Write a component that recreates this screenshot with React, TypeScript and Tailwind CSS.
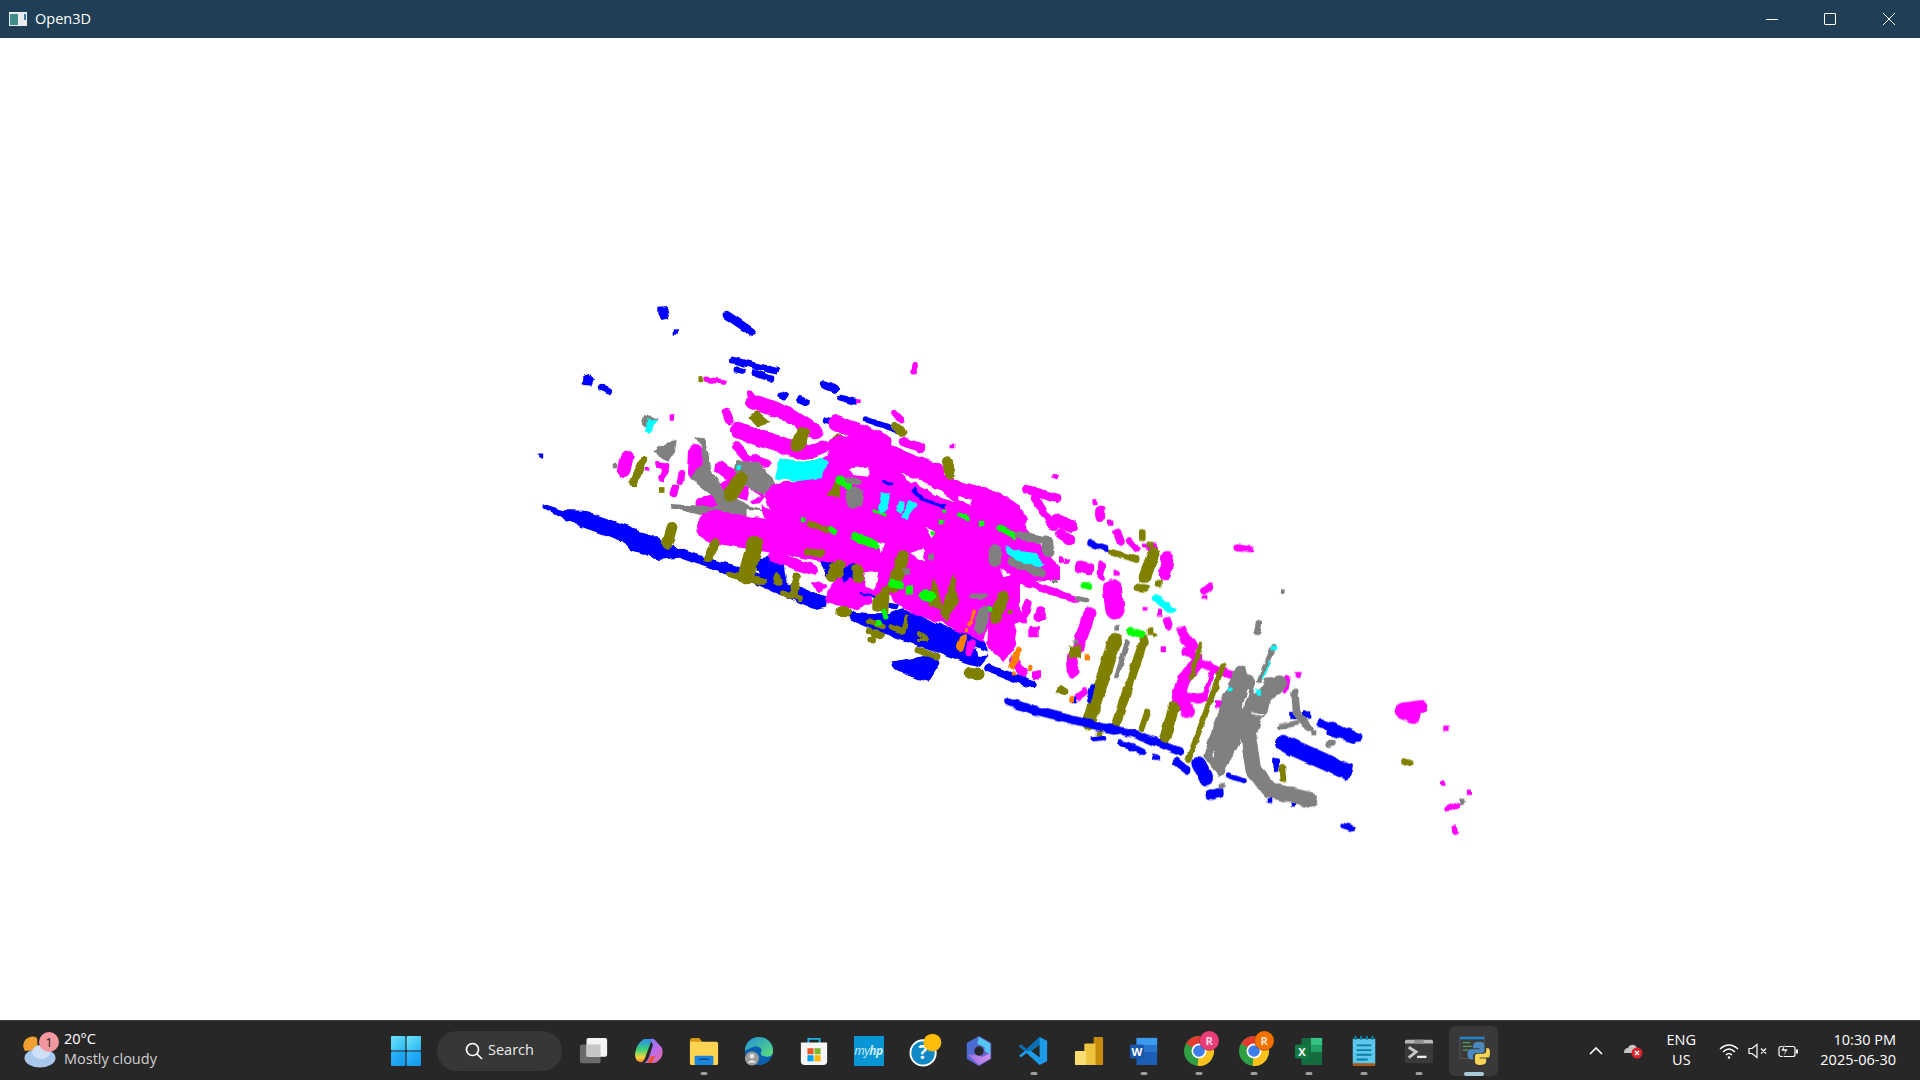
import React from "react";

const M = "#ff00ff", B = "#0000ff", O = "#808000", G = "#808080", C = "#00ffff", N = "#00ff00", R = "#ff8000", W = "#ffffff";
type S = [string, number, number[]];

// Shape coordinates are in 3x pixels relative to each group's origin. Width 0 = filled polygon; one point = square dot.
const z1: S[] = [
  [B, 0, [415,50,440,48,448,85,425,90,415,75]], [B, 16, [469,126]], [B, 20, [620,75,695,125]], [B, 16, [637,210,768,243]],
  [B, 15, [650,238,668,242]], [B, 16, [702,248,750,265]], [B, 0, [190,258,210,252,222,270,215,287,188,285]], [B, 18, [245,293,265,302]],
  [B, 20, [912,283,945,296]], [B, 14, [960,323,1005,335]], [B, 18, [787,316,793,320]], [B, 15, [838,328,860,337]], [B, 18, [920,392,933,395]],
  [B, 14, [1037,388,1130,420]], [B, 15, [62,498]],
  [B, 0, [65,640,130,660,190,662,325,712,395,735,480,780,640,825,920,920,915,950,885,958,700,880,500,800,415,810,365,790,330,780,300,745,180,705,125,685,65,655]],
  [B, 40, [195,688,320,732]], [B, 36, [375,765,415,785]], [B, 22, [480,790,650,850]],
  [B, 0, [1115,1115,1240,1095,1262,1120,1225,1175,1170,1160,1120,1135]],
  [B, 0, [700,810,740,800,790,815,800,880,720,860]], [B, 0, [900,810,1040,830,1030,890,920,860]],
  [M, 13, [560,268,612,276]], [O, 15, [543,266]], [M, 14, [1015,335]], [M, 16, [457,381]], [M, 24, [622,368,628,388]], [M, 14, [1185,225,1183,245]],
  [M, 16, [1125,370,1145,390]], [M, 30, [322,500,312,545]], [M, 16, [438,530,425,565]], [M, 14, [412,525,438,530]], [M, 16, [486,550,480,575]], [M, 18, [466,595,460,610]], [M, 14, [381,538]], [M, 32, [527,482,524,548]],
  [G, 0, [400,485,440,455,470,450,465,490,445,515]], [G, 0, [372,375,412,385,400,415,365,405]], [C, 0, [382,388,410,390,392,435,375,425]], [G, 14, [285,528]],
  [O, 18, [370,510,340,580]], [O, 17, [425,600]],
  [M, 36, [700,335,800,370,885,425]], [M, 40, [655,420,720,445,850,485]], [M, 14, [690,310,700,335]], [M, 22, [650,470,680,505]], [M, 30, [600,530,640,560]], [M, 34, [620,590,710,620]], [M, 30, [545,640,610,625]], [M, 20, [700,505,740,520]],
  [G, 0, [525,442,552,445,565,490,575,540,610,600,690,650,750,665,680,660,680,680,640,690,600,660,580,620,510,565,545,520,545,470]],
  [G, 0, [452,642,600,650,610,685,540,675,455,655]],
  [G, 0, [650,510,720,520,760,570,775,600,730,615,680,590,640,540]],
  [M, 0, [760,640,810,600,880,520,950,480,1000,430,1100,460,1150,480,1200,520,1260,560,1440,610,1500,650,1500,1000,1400,990,1200,970,1080,900,1060,810,900,790,780,720]],
  [M, 78, [580,710,1060,790]], [M, 120, [800,650,1100,700]], [M, 26, [760,800,880,840]], [M, 0, [920,900,960,855,1055,885,1060,940,1000,960,915,935]],
  [M, 40, [950,400,1090,455]], [M, 22, [1150,455,1205,475]], [M, 30, [910,470,860,490]], [M, 16, [690,710,730,745]],
  [W, 0, [720,640,735,620,750,660]], [W, 0, [690,595,720,620,680,640]], [W, 0, [990,540,1040,535,1045,565,1000,560]],
  [C, 0, [780,503,850,515,905,503,925,515,905,565,820,575,765,565]], [C, 14, [657,533]],
  [O, 35, [662,565,632,615]], [O, 0, [685,380,712,362,752,395,710,410]], [O, 32, [848,428,832,465]], [O, 30, [955,452,965,478]], [O, 20, [1125,408,1150,428]], [O, 22, [1285,515,1290,548]],
  [O, 26, [456,712,442,760]], [O, 22, [585,758,566,805]], [O, 40, [705,762,678,858]], [O, 16, [628,852,728,875]], [O, 20, [830,860,820,915]], [O, 14, [792,910,840,925]], [O, 26, [955,815,935,860]], [O, 20, [772,862,775,875]],
  [O, 16, [860,785,905,790]], [O, 14, [870,700,920,720]], [O, 20, [965,960,985,970]], [O, 0, [920,620,960,550,990,590,960,620]],
  [N, 22, [965,565,975,590]], [N, 14, [850,690]], [N, 12, [930,715,945,725]], [G, 30, [1005,620,1010,635]], [G, 16, [985,565,1020,575]], [O, 12, [1045,1022,1070,1025]], [O, 13, [1050,1050,1060,1050]],
  [M, 0, [870,880,895,870,920,890,900,910]],
];

const z3: S[] = [
  [M, 20, [190,5,245,25]], [M, 60, [0,25,150,60]], [M, 38, [170,50,290,95]], [M, 32, [330,135,470,175]], [M, 14, [336,18]], [M, 14, [645,110]],
  [M, 0, [0,100,40,70,150,40,280,90,470,170,440,230,490,190,550,210,560,270,620,340,660,380,660,420,610,420,550,430,520,440,500,470,530,560,520,620,490,660,440,620,380,590,290,540,240,530,200,490,150,430,110,480,50,400,0,430]],
  [M, 70, [0,330,120,375]], [M, 60, [0,60,60,130]], [M, 40, [240,480,290,520]],
  [M, 18, [555,425,710,480]], [M, 22, [560,148,650,175]], [M, 20, [585,175,640,260]], [M, 30, [650,240,695,260]], [M, 30, [510,210,545,240]], [M, 24, [640,390,640,410]],
  [M, 14, [765,185]], [M, 22, [780,212,782,232]], [M, 18, [810,248]], [M, 16, [560,490,545,538]], [M, 26, [602,515,600,530]], [M, 30, [580,577]], [M, 30, [470,590,510,610]], [M, 20, [520,660,550,700]], [M, 22, [592,705]],
  [M, 14, [665,360]], [M, 14, [682,364]], [M, 28, [720,380,745,388]], [M, 24, [660,280,690,300]],
  [W, 0, [30,85,85,80,85,110,40,105]], [W, 0, [180,100,240,120,210,130]], [W, 0, [220,115,300,150,345,190,300,170,240,140]], [W, 0, [355,165,395,180,395,195,355,180]], [W, 0, [255,260,285,275,275,295]], [W, 0, [210,340,250,325,255,365]], [W, 0, [112,305,135,310,125,340]], [W, 0, [480,385,515,405,490,412]], [W, 0, [170,465,200,455,200,510,180,490]], [W, 0, [70,400,115,395,105,450,80,440]], [W, 0, [445,560,430,600,490,665,440,640]], [W, 0, [375,620,390,610,385,640]],
  [B, 0, [25,530,40,515,100,520,145,520,190,505,210,515,440,610,445,650,420,680,380,670,300,640,100,570,40,545]],
  [B, 0, [155,665,270,645,300,670,270,720,200,700]], [B, 20, [445,685,575,732]], [B, 0, [210,150,225,140,250,175,320,195,310,205,240,180]], [B, 8, [135,125,155,132]], [B, 0, [0,390,45,365,50,400,10,430]], [B, 16, [145,495,165,498]],
  [W, 0, [380,610,445,635,440,650,415,650,410,625]],
  [M, 36, [175,465,235,505]], [M, 20, [395,610,385,640]], [M, 0, [445,545,530,570,520,630,490,665,445,625]], [M, 20, [415,480,380,550]],
  [O, 0, [100,480,130,440,150,440,145,520,100,510]], [O, 30, [190,350,160,440]], [O, 0, [285,410,310,510,270,500,265,470]], [O, 0, [340,400,355,480,320,545,300,520]], [O, 28, [490,470,465,535]], [O, 20, [105,580,120,585]], [O, 20, [95,600]], [O, 26, [5,515,15,515]], [O, 30, [390,700,415,702]], [O, 18, [235,630,290,650]], [O, 12, [85,545,130,560]], [O, 12, [150,560,190,575]], [O, 10, [200,530,190,580]], [O, 10, [240,580,255,590]], [O, 26, [50,385,55,415]], [O, 22, [0,370,-5,400]], [O, 26, [322,65,330,100]], [O, 12, [812,335,890,355]], [O, 20, [660,750]], [O, 10, [262,600,240,600]], [O, 16, [660,745,675,755]], [O, 14, [510,515]],
  [N, 22, [48,290,105,315]], [N, 16, [482,265,525,288]], [N, 16, [305,245]], [N, 12, [355,225,385,235]], [N, 16, [425,250]], [N, 12, [278,280]], [N, 26, [255,467,270,470]], [N, 16, [155,430,185,435]], [N, 22, [208,450]], [N, 14, [130,515,140,530]], [N, 14, [115,550]], [N, 22, [0,120,20,135]], [N, 14, [450,508]], [N, 12, [310,212]], [N, 8, [105,210,135,225]], [N, 14, [730,480]], [N, 18, [738,438]],
  [G, 42, [42,165,45,180]], [G, 16, [25,120,55,125]], [G, 30, [465,332,465,362]], [G, 20, [515,365,605,400]], [G, 30, [620,305,625,335]], [G, 18, [535,285,600,300]], [G, 26, [430,515,420,565]], [G, 12, [395,468,435,468]], [G, 20, [200,395]], [G, 18, [270,350]], [G, 12, [645,425]], [G, 16, [715,475,735,480]],
  [C, 0, [125,160,152,160,140,210,125,222,115,200]], [C, 0, [178,182,195,185,185,218,168,215]], [C, 0, [205,180,235,190,200,238,186,232]], [C, 0, [520,330,590,340,615,375,605,385,525,360,500,340,500,315]],
  [R, 8, [403,515,388,555]], [R, 12, [378,570]], [R, 17, [370,595,362,622]], [R, 16, [535,630,515,680]], [R, 14, [572,680,570,688]], [R, 12, [522,700]], [B, 6, [60,460,105,470]],
];

const z2: S[] = [
  [M, 14, [285,155]], [M, 14, [165,80]], [M, 24, [302,182,300,195]], [M, 16, [332,218]], [M, 20, [352,248,362,275]], [M, 16, [388,272,408,295]], [M, 14, [433,288]], [M, 26, [452,293,458,293]], [M, 30, [502,322,495,375]],
  [M, 14, [712,292,755,298]], [M, 18, [612,422,628,412]], [M, 14, [615,442]], [M, 14, [435,478]], [M, 18, [480,488]], [M, 18, [500,510,505,530]], [M, 26, [545,545,575,590]], [M, 22, [555,605,590,620]],
  [M, 32, [590,640,550,690,535,740,565,785]], [M, 22, [560,742,610,745]], [M, 20, [605,640,680,670,750,690]], [M, 12, [635,670,615,740]], [M, 16, [490,597]], [M, 22, [656,762]], [M, 18, [893,675]], [M, 16, [862,685,855,720]],
  [M, 46, [337,415,345,480]], [M, 28, [240,350,265,355]], [M, 16, [305,340,303,380]], [M, 18, [350,368]], [M, 16, [185,330]], [M, 14, [202,333]],
  [M, 30, [268,490,235,590]], [M, 28, [215,625,218,665]], [M, 16, [255,725,235,740]],
  [M, 16, [85,460,72,510]], [M, 28, [122,490]], [M, 28, [102,545]], [M, 22, [110,677]],
  [M, 28, [1205,775,1265,768]], [M, 34, [1205,785,1240,800]], [M, 16, [1338,835]], [M, 16, [1328,1002]], [M, 16, [1408,1027]], [M, 14, [1342,1078,1370,1064]], [M, 16, [1364,1133,1367,1148]],
  [O, 14, [332,305,410,330]], [O, 30, [460,312,435,380]], [O, 16, [427,247,427,265]], [O, 20, [450,285]], [O, 18, [412,412,435,414]], [O, 20, [475,400]], [O, 16, [425,388]], [O, 20, [450,545]], [O, 12, [465,555]], [O, 34, [345,570,265,820]], [O, 22, [432,570,345,830]], [O, 14, [442,785,425,835]], [O, 26, [522,770,490,880]], [O, 14, [668,650,565,930]], [O, 12, [600,585,575,680]], [O, 36, [225,605]], [O, 22, [180,720]], [O, 14, [847,950,850,990]], [O, 14, [1212,933,1232,940]], [O, 14, [300,850]],
  [B, 16, [272,280,318,295]], [B, 20, [25,755,100,780,300,830,400,850,540,905]], [B, 16, [365,880,430,905]], [B, 14, [462,920,475,924]], [B, 18, [530,935,560,960]], [B, 34, [595,940,618,985]], [B, 26, [630,1035,655,1028]], [B, 12, [682,975,730,992]], [B, 40, [850,880,1030,960]], [B, 20, [965,820,1075,860]], [B, 14, [985,845,1060,870]], [B, 24, [880,795]], [B, 22, [920,795]], [B, 14, [1030,1127,1058,1135]], [B, 14, [810,1052]], [B, 16, [880,1062]], [B, 12, [278,710,266,752]], [B, 14, [222,750]], [B, 14, [280,868,310,865]], [B, 14, [1040,980,1050,950]], [B, 14, [828,930,830,960]],
  [G, 12, [382,578,350,680]], [G, 0, [710,645,735,650,750,700,720,880,660,985,610,920,660,760]], [G, 38, [838,700,775,750,745,860,760,960,810,1020,930,1050]], [G, 18, [885,730,890,790,930,835]], [G, 14, [890,820,840,830]], [G, 18, [940,850]], [G, 16, [777,520,772,545]], [G, 14, [847,425]], [G, 14, [985,882,1002,876]], [G, 14, [822,590,780,690]], [G, 18, [1387,1055]], [G, 18, [665,1008]], [G, 14, [350,535]], [G, 14, [225,575]], [G, 30, [810,700,780,790]], [G, 44, [740,700,700,840]],
  [W, 4, [745,720,730,770]], [W, 4, [755,790,790,795]], [W, 3, [640,905,640,920]],
  [C, 16, [823,595]], [C, 5, [808,635,790,685]], [C, 16, [775,727]], [C, 14, [688,717]], [C, 18, [467,445,515,480]],
  [N, 18, [392,545,425,552]], [N, 18, [250,405,265,410]],
  [R, 14, [215,748]], [R, 16, [262,620]],
];

function Shapes({ data }: { data: S[] }) {
  return (
    <>
      {data.map(([c, w, p], i) => {
        if (p.length === 2) return <rect key={i} x={p[0] - w / 2} y={p[1] - w / 2} width={w} height={w} fill={c} />;
        const pts = p.join(" ");
        return w === 0 ? (
          <polygon key={i} points={pts} fill={c} />
        ) : (
          <polyline key={i} points={pts} fill="none" stroke={c} strokeWidth={w * 1.25} strokeLinecap="round" strokeLinejoin="round" />
        );
      })}
    </>
  );
}

function Cell({ children, dot, active }: { children: React.ReactNode; dot?: boolean; active?: boolean }) {
  return (
    <div className={`relative mx-[3px] flex h-[50px] w-[49px] items-center justify-center rounded-md ${active ? "bg-[#393939]" : ""}`}>
      {children}
      {dot && <span className="absolute bottom-[1px] left-1/2 h-[3px] w-[7px] -translate-x-1/2 rounded-full bg-[#9c9c9c]" />}
      {active && <span className="absolute bottom-[0px] left-1/2 h-[4px] w-[20px] -translate-x-1/2 rounded-full bg-[#a9cbd9]" />}
    </div>
  );
}

const Ic = ({ children, s = 30 }: { children: React.ReactNode; s?: number }) => (
  <svg width={s} height={s} viewBox="0 0 32 32" className="block overflow-visible">{children}</svg>
);

function Chrome({ badge }: { badge: string }) {
  return (
    <Ic>
      <circle cx="16" cy="16" r="16" fill="#2f9e44" />
      <path d="M16 16 L2.2 8 A16 16 0 0 1 29.8 8 Z" fill="#e53a30" />
      <path d="M16 16 L29.8 8 A16 16 0 0 1 14.5 32 Z" fill="#fbc21b" />
      <circle cx="16" cy="16" r="8" fill="#fff" />
      <circle cx="16" cy="16" r="6.2" fill="#3f7de8" />
      <circle cx="27" cy="5" r="10.5" fill={badge} stroke="#00000040" strokeWidth="1" />
      <text x="27" y="9.5" textAnchor="middle" fontSize="12" fontWeight="700" fill="#ffffffcc" fontFamily="Open Sans, sans-serif">R</text>
    </Ic>
  );
}

export default function App() {
  const f = { fontFamily: '"Open Sans", "Noto Sans", sans-serif' };
  return (
    <div className="flex h-[1080px] w-[1920px] flex-col overflow-hidden bg-white" style={f}>
      {/* title bar */}
      <div className="flex h-[38px] shrink-0 items-center bg-[#203f56] text-white">
        <svg width="18" height="14" viewBox="0 0 18 14" className="ml-[9px]">
          <rect width="18" height="14" fill="#e8ecec" />
          <rect x="1" y="2" width="8" height="11" fill="#3d8f88" />
          <rect x="15" y="2" width="2" height="6" fill="#3d78a8" />
        </svg>
        <span className="ml-[8px] text-[14.5px] leading-none">Open3D</span>
        <div className="ml-auto flex pr-[2px]">
          <div className="flex h-[38px] w-[58px] items-center justify-center">
            <span className="mr-[2px] block h-[1px] w-[12px] bg-white" />
          </div>
          <div className="flex h-[38px] w-[58px] items-center justify-center">
            <span className="mr-[2px] block h-[12px] w-[12px] rounded-[1px] border border-white" />
          </div>
          <div className="flex h-[38px] w-[58px] items-center justify-center">
            <svg width="12" height="12" viewBox="0 0 12 12"><path d="M0 0 L12 12 M12 0 L0 12" stroke="#fff" strokeWidth="1" /></svg>
          </div>
        </div>
      </div>

      {/* 3D viewport */}
      <div className="min-h-0 flex-1">
        <svg width="1920" height="982" viewBox="0 38 1920 982" className="block">
          <defs>
            <filter id="rough" x="400" y="250" width="1400" height="650" filterUnits="userSpaceOnUse">
              <feTurbulence type="fractalNoise" baseFrequency="0.13" numOctaves="1" seed="4" result="n" />
              <feDisplacementMap in="SourceGraphic" in2="n" scale="5" xChannelSelector="R" yChannelSelector="G" />
            </filter>
          </defs>
          <g filter="url(#rough)">
            <g transform="translate(520 290) scale(0.3333)"><Shapes data={z1} /></g>
            <g transform="translate(840 440) scale(0.3333)"><Shapes data={z3} /></g>
            <g transform="translate(1000 450) scale(0.3333)"><Shapes data={z2} /></g>
          </g>
        </svg>
      </div>

      {/* taskbar */}
      <div className="flex h-[60px] shrink-0 items-center border-t border-[#3c3c3c] bg-[#272727] text-white">
        <div className="flex w-[378px] shrink-0 items-center pl-[24px]">
          <svg width="34" height="36" viewBox="0 0 34 36" className="overflow-visible">
            <path d="M13 5 A9 9 0 0 0 1 18 L14 17 Z" fill="#f0a030" />
            <ellipse cx="16" cy="25" rx="15.5" ry="9.5" fill="#a9c8ee" />
            <ellipse cx="17" cy="19" rx="9" ry="7" fill="#cfe0f6" />
            <circle cx="25" cy="9" r="10" fill="#f4969e" />
            <text x="25" y="13.5" textAnchor="middle" fontSize="13" fill="#222" fontFamily="Open Sans, sans-serif">1</text>
          </svg>
          <div className="ml-[6px] flex flex-col pb-[3px]">
            <span className="text-[14.5px] leading-[20px]">20°C</span>
            <span className="text-[14.5px] leading-[20px] text-[#d2d2d2]">Mostly cloudy</span>
          </div>
        </div>

        <div className="flex items-center">
          <Cell>
            <svg width="30" height="30" viewBox="0 0 30 30">
              <defs>
                <linearGradient id="w1" x1="0" y1="0" x2="1" y2="1"><stop offset="0" stopColor="#6fe3fb" /><stop offset="1" stopColor="#29b6f6" /></linearGradient>
                <linearGradient id="w2" x1="0" y1="0" x2="1" y2="1"><stop offset="0" stopColor="#2cb7f7" /><stop offset="1" stopColor="#1295f0" /></linearGradient>
              </defs>
              <rect x="0" y="0" width="14.4" height="14.4" rx="1" fill="url(#w1)" />
              <rect x="15.6" y="0" width="14.4" height="14.4" rx="1" fill="url(#w1)" />
              <rect x="0" y="15.6" width="14.4" height="14.4" rx="1" fill="url(#w2)" />
              <rect x="15.6" y="15.6" width="14.4" height="14.4" rx="1" fill="url(#w2)" />
            </svg>
          </Cell>
          <div className="mx-[4px] flex h-[40px] w-[125px] items-center justify-center rounded-full bg-[#373737]">
            <svg width="18" height="18" viewBox="0 0 18 18" fill="none" stroke="#fff" strokeWidth="1.7"><circle cx="7.5" cy="7.5" r="6" /><path d="M12 12 L17 17" /></svg>
            <span className="ml-[5px] text-[14.5px] leading-none text-[#ececec]">Search</span>
          </div>
          <div className="flex items-center">
            <Cell>
              <Ic>
                <rect x="1" y="9" width="22" height="20" rx="2" fill="#6a6a6a" />
                <rect x="8" y="2" width="22" height="20" rx="2" fill="#f4f4f4" />
                <rect x="8" y="9" width="15" height="13" fill="#c6c6c6" />
              </Ic>
            </Cell>
            <Cell>
              <svg width="28" height="26" viewBox="0 0 28 26" className="block">
                <defs>
                  <linearGradient id="cp1" x1="0" y1="0" x2="0" y2="1"><stop offset="0" stopColor="#2a8cf0" /><stop offset=".45" stopColor="#3dd07a" /><stop offset=".8" stopColor="#f6d43a" /><stop offset="1" stopColor="#f2803a" /></linearGradient>
                  <linearGradient id="cp2" x1="0" y1="0" x2="1" y2="1"><stop offset="0" stopColor="#5a8cf5" /><stop offset=".5" stopColor="#b86cf0" /><stop offset="1" stopColor="#f0689a" /></linearGradient>
                </defs>
                <path d="M9 1 H17 L10 20 Q8 25 5 24 Q0 23 0 16 Q1 6 9 1 Z" fill="url(#cp1)" />
                <path d="M15 1 Q18 0 20 2 L27 10 Q29 18 24 22 Q22 25 18 25 H9 Q12 24 14 19 L18 7 Z" fill="url(#cp2)" />
                <path d="M12 25 Q15 21 15.5 18 L20 18 L17 25 Z" fill="#f0503c" />
              </svg>
            </Cell>
            <Cell dot>
              <Ic>
                <path d="M1 5 Q1 2 4 2 H11 L14 6 V12 H1 Z" fill="#d99a12" />
                <path d="M1 6 H29 Q31 6 31 8 V29 Q31 31 29 31 H3 Q1 31 1 29 Z" fill="#ffd452" />
                <rect x="6" y="21" width="20" height="10" rx="1.5" fill="#1a86dd" />
                <rect x="11" y="24" width="10" height="1.6" fill="#0d4d8c" />
              </Ic>
            </Cell>
            <Cell>
              <Ic>
                <defs><linearGradient id="e1" x1="0" y1="0" x2="1" y2="1"><stop offset="0" stopColor="#1f8fd8" /><stop offset="1" stopColor="#5fe07a" /></linearGradient></defs>
                <circle cx="16" cy="16" r="15" fill="#0b5fb0" />
                <path d="M1 16 A15 15 0 0 1 31 16 Q31 22 25 22 Q15 22 19 15 Q15 9 9 12 Q3 14 1 16 Z" fill="url(#e1)" />
                <circle cx="8.5" cy="24" r="7.5" fill="#9b9b9b" />
                <circle cx="8.5" cy="21.5" r="2.6" fill="#e4e4e4" />
                <path d="M4 28.5 Q8.5 22.5 13 28.5 Z" fill="#e4e4e4" />
              </Ic>
            </Cell>
            <Cell>
              <Ic>
                <path d="M10 8 V3 H22 V8" fill="none" stroke="#1db4e8" strokeWidth="2" />
                <path d="M2 7 H30 V27 Q30 31 26 31 H6 Q2 31 2 27 Z" fill="#f6f6f6" />
                <rect x="9" y="13" width="6.5" height="6.5" fill="#f0572b" />
                <rect x="16.5" y="13" width="6.5" height="6.5" fill="#7db82e" />
                <rect x="9" y="20.5" width="6.5" height="6.5" fill="#05a4ef" />
                <rect x="16.5" y="20.5" width="6.5" height="6.5" fill="#ffb902" />
              </Ic>
            </Cell>
            <Cell>
              <div className="flex h-[30px] w-[30px] items-center justify-center bg-[#0a96d6]">
                <span className="text-[12px] italic leading-none tracking-[-0.5px] text-[#cfeaf7]">my<b>hp</b></span>
              </div>
            </Cell>
            <Cell>
              <Ic>
                <circle cx="15" cy="18" r="13.5" fill="#1088c6" stroke="#fff" strokeWidth="2" />
                <text x="15" y="25" textAnchor="middle" fontSize="20" fontWeight="700" fill="#fff" fontFamily="Open Sans, sans-serif">?</text>
                <circle cx="25" cy="7" r="9.5" fill="#fdbb0a" />
              </Ic>
            </Cell>
            <Cell>
              <Ic>
                <defs>
                  <linearGradient id="m1" x1="0" y1="0" x2="1" y2="1"><stop offset="0" stopColor="#3a6fd8" /><stop offset="1" stopColor="#7f5ac8" /></linearGradient>
                  <linearGradient id="m2" x1="0" y1="0" x2="1" y2="0"><stop offset="0" stopColor="#9f6fe0" /><stop offset="1" stopColor="#c794ea" /></linearGradient>
                </defs>
                <path d="M16 1 L28 8 V24 L16 31 L4 24 V8 Z" fill="url(#m1)" stroke="url(#m1)" strokeWidth="2" strokeLinejoin="round" />
                <path d="M16 1 L28 8 V20 L22 16 V12 L14 8 Z" fill="#52c6ee" />
                <path d="M4 20 L16 31 L28 24 V18 L20 22 L12 20 Z" fill="url(#m2)" />
                <circle cx="16" cy="16" r="5" fill="#272727" />
              </Ic>
            </Cell>
            <Cell dot>
              <Ic>
                <path d="M22 1 L30 5 V27 L22 31 L8 18 L2 23 L0 21 L6 16 L0 11 L2 9 L8 14 Z M22 9 L13 16 L22 23 Z" fill="#1c9be8" fillRule="evenodd" />
                <path d="M2 9 L8 14 L22 1 V9 L13 16 L6 16 L0 11 Z" fill="#0a6fb4" />
              </Ic>
            </Cell>
            <Cell>
              <Ic>
                <rect x="21" y="1" width="10" height="30" rx="1" fill="#c98a0c" />
                <rect x="11" y="8" width="12" height="23" rx="1" fill="#eec33e" />
                <rect x="1" y="16" width="12" height="15" rx="1" fill="#f8dd72" />
              </Ic>
            </Cell>
            <Cell dot>
              <Ic>
                <rect x="8" y="2" width="22" height="29" rx="1" fill="#1b5fb8" />
                <rect x="8" y="2" width="22" height="8" fill="#3c9bee" />
                <rect x="8" y="10" width="22" height="7" fill="#2a75d0" />
                <rect x="1" y="9" width="15" height="15" rx="1.5" fill="#1a56ab" />
                <text x="8.5" y="21" textAnchor="middle" fontSize="12" fontWeight="700" fill="#fff" fontFamily="Open Sans, sans-serif">W</text>
              </Ic>
            </Cell>
            <Cell dot><Chrome badge="#ea3d78" /></Cell>
            <Cell dot><Chrome badge="#f07000" /></Cell>
            <Cell dot>
              <Ic>
                <rect x="8" y="2" width="22" height="29" rx="1" fill="#156c3f" />
                <rect x="18" y="2" width="12" height="8" fill="#33c481" />
                <rect x="18" y="10" width="12" height="7" fill="#21a366" />
                <rect x="1" y="9" width="15" height="15" rx="1.5" fill="#107a41" />
                <text x="8.5" y="21" textAnchor="middle" fontSize="12" fontWeight="700" fill="#fff" fontFamily="Open Sans, sans-serif">X</text>
              </Ic>
            </Cell>
            <Cell dot>
              <Ic>
                <rect x="4" y="3" width="24" height="27" fill="#5cc7ec" />
                <rect x="4" y="29" width="24" height="3" fill="#a85c1c" />
                <path d="M7 3 V1 M13 3 V1 M19 3 V1 M25 3 V1" stroke="#0c7ea8" strokeWidth="2.5" strokeLinecap="round" />
                <path d="M8 10 H24 M8 15 H24 M8 20 H24 M8 25 H20" stroke="#0c7ea8" strokeWidth="2" />
              </Ic>
            </Cell>
            <Cell dot>
              <Ic>
                <rect x="1" y="4" width="30" height="25" rx="2" fill="#3a3a3a" />
                <path d="M3 4 H29 Q31 4 31 6 V8 H1 V6 Q1 4 3 4 Z" fill="#b8b8b8" />
                <rect x="11" y="4" width="10" height="4" fill="#8f8f8f" />
                <path d="M5 12 L13 17 L5 23" fill="none" stroke="#c8c8c8" strokeWidth="3" />
                <rect x="14" y="21" width="10" height="2.5" fill="#ededed" />
              </Ic>
            </Cell>
            <Cell active>
              <Ic>
                <rect x="1" y="1" width="26" height="23" fill="#3a3a3a" stroke="#555" strokeWidth="1" />
                <rect x="1" y="1" width="26" height="2.5" fill="#1c86d0" />
                <path d="M4 7 H12 M4 11 H14 M4 15 H10" stroke="#58a05c" strokeWidth="1.2" />
                <path d="M22 6 Q15 6 15 10 V13 H22 V14 H13 Q9 14 9 19 Q9 25 13 25 H15 V21 Q15 18 19 18 H24 Q27 18 27 15 V10 Q27 6 22 6 Z" fill="#4a88bd" />
                <path d="M22 31 Q29 31 29 27 V24 H22 V23 H31 Q33 23 33 18 Q33 13 31 13 H29 V16 Q29 19 25 19 H20 Q17 19 17 22 V27 Q17 31 22 31 Z" fill="#f6d552" />
              </Ic>
            </Cell>
          </div>
        </div>

        {/* tray */}
        <div className="ml-auto flex items-center pr-[24px]">
          <svg width="14" height="8" viewBox="0 0 14 8" fill="none" stroke="#fff" strokeWidth="1.6" className="mr-[19px]"><path d="M1 7 L7 1 L13 7" /></svg>
          <svg width="22" height="16" viewBox="0 0 22 16" className="mr-[16px]">
            <path d="M2 10 Q2 5 6 5 Q8 1 12 2 Q16 3 15 10 Z" fill="#c4c4c4" />
            <circle cx="15" cy="10" r="5.5" fill="#d9242f" />
            <path d="M13 8 L17 12 M17 8 L13 12" stroke="#fff" strokeWidth="1.4" />
          </svg>
          <div className="flex w-[42px] flex-col items-center pb-[2px] text-[14.5px] leading-[20px]">
            <span>ENG</span>
            <span>US</span>
          </div>
          <svg width="20" height="16" viewBox="0 0 20 16" fill="none" stroke="#fff" strokeWidth="1.3" className="ml-[17px]">
            <path d="M1 6 Q10 -2 19 6 M4 9 Q10 3 16 9 M7 12 Q10 9 13 12" />
            <circle cx="10" cy="14.5" r="1.2" fill="#fff" stroke="none" />
          </svg>
          <svg width="20" height="16" viewBox="0 0 20 16" fill="none" stroke="#fff" strokeWidth="1.2" className="ml-[9px]">
            <path d="M1 5.5 H4 L9 1.5 V14.5 L4 10.5 H1 Z M13 5.5 L18 10.5 M18 5.5 L13 10.5" />
          </svg>
          <svg width="21" height="16" viewBox="0 0 21 16" fill="none" stroke="#fff" strokeWidth="1.2" className="ml-[10px]">
            <rect x="1" y="3.5" width="16" height="10" rx="2" />
            <rect x="18" y="6.5" width="2" height="4" fill="#fff" stroke="none" />
            <path d="M7 0 L3 8 H7 L5 14 L10 6 H6 Z" fill="#fff" stroke="#272727" strokeWidth="0.6" />
          </svg>
          <div className="ml-[21px] flex flex-col items-end pb-[2px] text-[14.5px] leading-[20px]">
            <span>10:30 PM</span>
            <span>2025-06-30</span>
          </div>
        </div>
      </div>
    </div>
  );
}
